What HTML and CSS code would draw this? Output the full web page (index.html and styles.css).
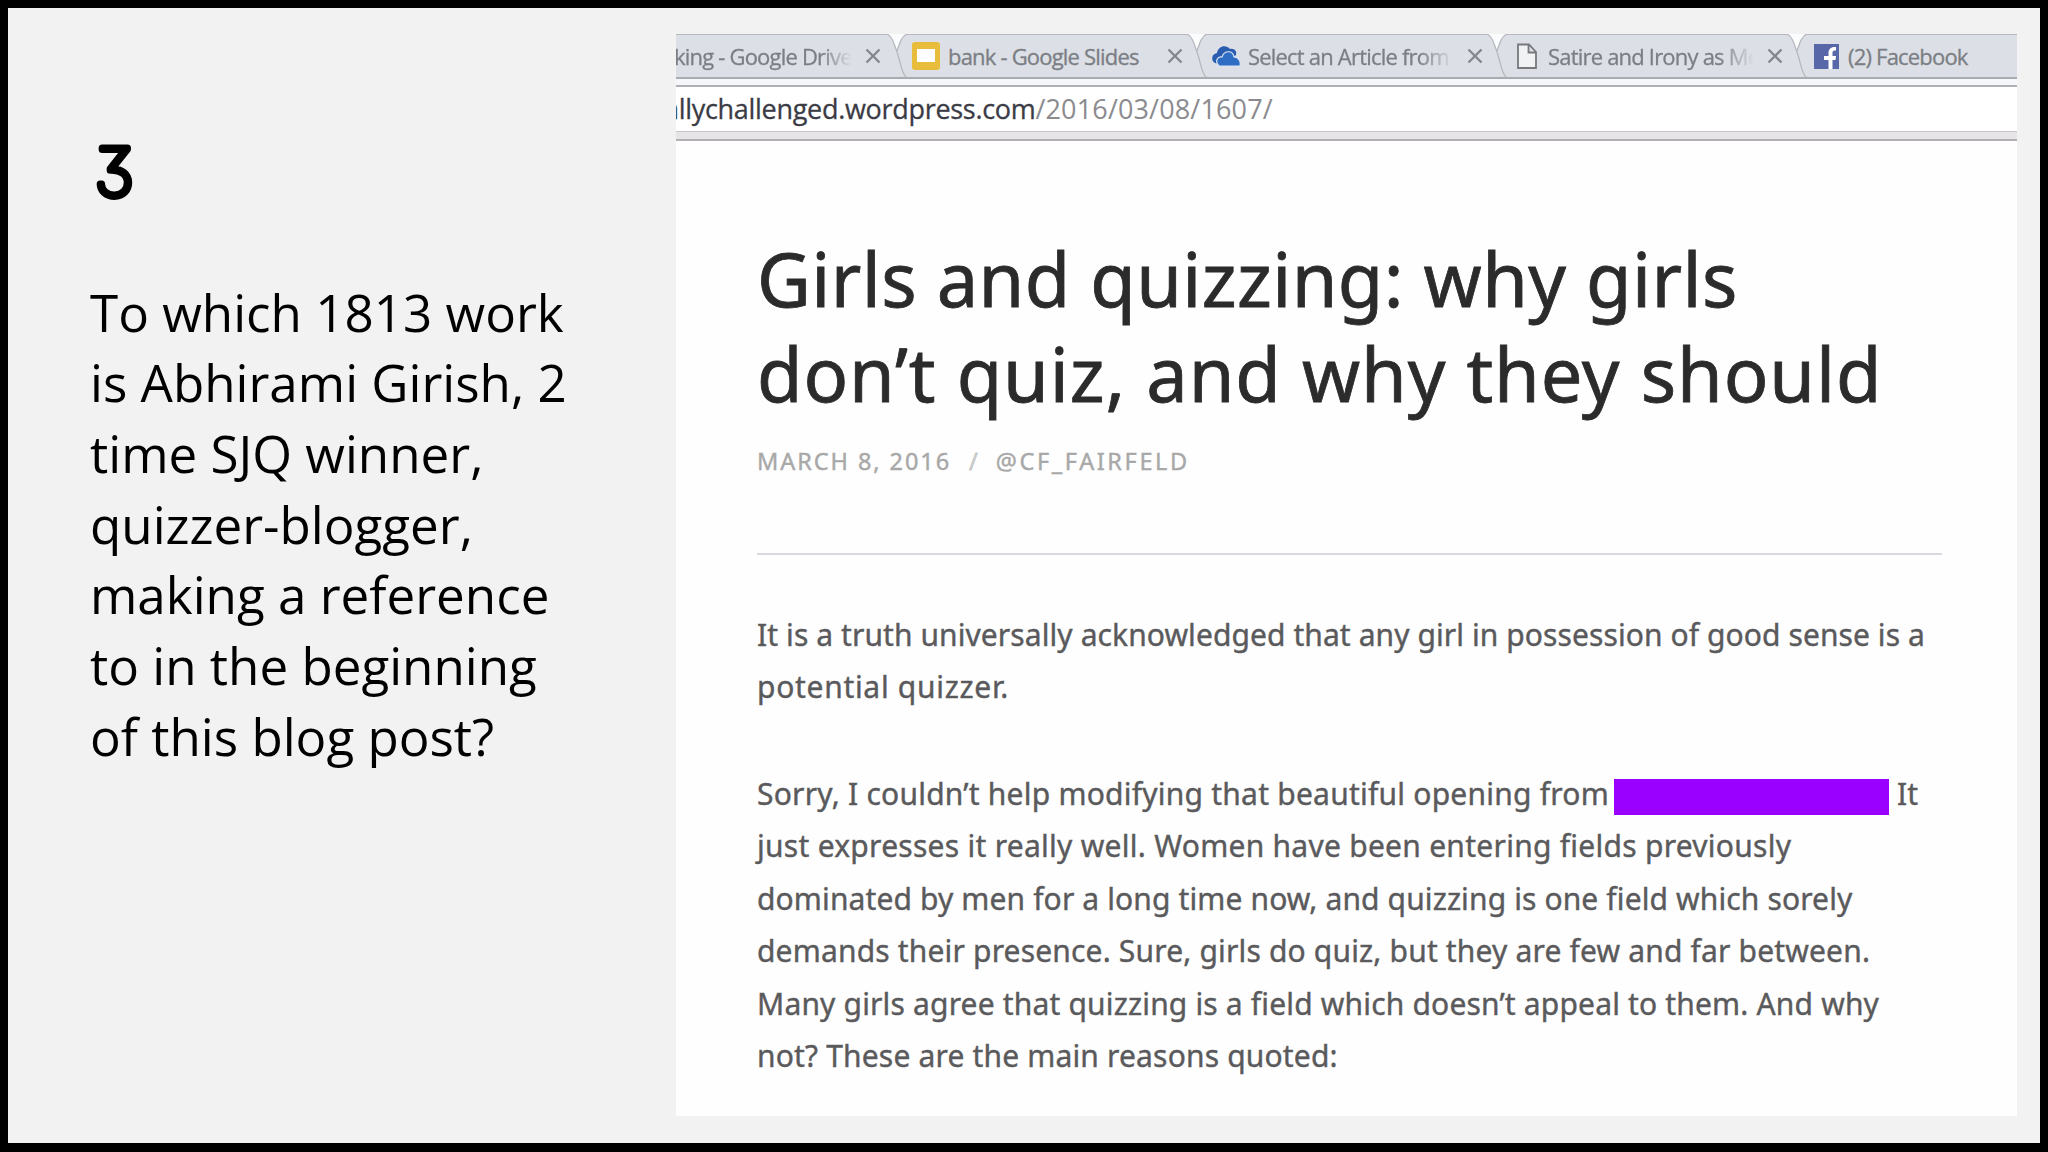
FILE: index.html
```html
<!DOCTYPE html>
<html lang="en">
<head>
    <meta charset="UTF-8">
    <meta name="viewport" content="width=device-width, initial-scale=1.0">
    <title>Question 3</title>
    <link rel="stylesheet" href="styles.css">
</head>
<body>

<div class="slide">

    <div class="question">
        <svg class="number" width="60" height="80" viewBox="0 0 60 80">
            <text class="number-text" transform="translate(5 62.5)">3</text>
        </svg>
        <p class="question-text">To which 1813 work<br>is Abhirami Girish, 2<br>time SJQ winner,<br>quizzer-blogger,<br>making a reference<br>to in the beginning<br>of this blog post?</p>
    </div>

    <div class="browser">
        <div class="tabs">
            <div class="tab tab-first">
                <span class="tab-title fade title-drive">king - Google Drive</span>
                <svg class="close" viewBox="0 0 16 16"><path d="M1.5 1.5l13 13M14.5 1.5l-13 13"/></svg>
            </div>
            <div class="tab">
                <svg class="notch" viewBox="0 0 22 42"><path class="gap" d="M0 -1C4 1 6 6 10 15C13 7 15 1 20 -1Z"/><path class="edge" d="M0 -1C6 2 7 9 11 20C14 30 15 38 19 42M20 -1C15 1 13 7 10 16"/></svg>
                <svg class="icon" viewBox="0 0 30 30"><rect x="1" y="1" width="28" height="28" rx="3" fill="#e9bd3c"/><rect x="6" y="8" width="18" height="13" fill="#fff"/></svg>
                <span class="tab-title">bank - Google Slides</span>
                <svg class="close" viewBox="0 0 16 16"><path d="M1.5 1.5l13 13M14.5 1.5l-13 13"/></svg>
            </div>
            <div class="tab">
                <svg class="notch" viewBox="0 0 22 42"><path class="gap" d="M0 -1C4 1 6 6 10 15C13 7 15 1 20 -1Z"/><path class="edge" d="M0 -1C6 2 7 9 11 20C14 30 15 38 19 42M20 -1C15 1 13 7 10 16"/></svg>
                <svg class="icon" viewBox="0 0 30 30"><path d="M4 22C0 20 0 13 6 12C7 5 15 3 19 8C24 7 26 11 25 14L12 24Z" fill="#2a5db0"/><path d="M8 25C3 20 7 15 11 16C13 9 22 9 23 16C28 16 30 21 29 25Z" fill="#2f6cc4" stroke="#dbe6f5" stroke-width="1.2"/></svg>
                <span class="tab-title fade">Select an Article from</span>
                <svg class="close" viewBox="0 0 16 16"><path d="M1.5 1.5l13 13M14.5 1.5l-13 13"/></svg>
            </div>
            <div class="tab">
                <svg class="notch" viewBox="0 0 22 42"><path class="gap" d="M0 -1C4 1 6 6 10 15C13 7 15 1 20 -1Z"/><path class="edge" d="M0 -1C6 2 7 9 11 20C14 30 15 38 19 42M20 -1C15 1 13 7 10 16"/></svg>
                <svg class="icon" viewBox="0 0 30 30"><path d="M7 3.500H18L25 11V27H7ZM17.500 4V11.500H25" fill="#f1f2f4" stroke="#77787c" stroke-width="1.800"/></svg>
                <span class="tab-title fade">Satire and Irony as Me</span>
                <svg class="close" viewBox="0 0 16 16"><path d="M1.5 1.5l13 13M14.5 1.5l-13 13"/></svg>
            </div>
            <div class="tab tab-last">
                <svg class="notch" viewBox="0 0 22 42"><path class="gap" d="M0 -1C4 1 6 6 10 15C13 7 15 1 20 -1Z"/><path class="edge" d="M0 -1C6 2 7 9 11 20C14 30 15 38 19 42M20 -1C15 1 13 7 10 16"/></svg>
                <svg class="icon" viewBox="0 0 30 30"><rect x="3" y="3" width="25" height="25" fill="#5767a8"/><path d="M17.500 28V19H13V15H17.500V12C17.500 8 20 5.500 25 6V9.500C22 9.300 21.500 10 21.500 12V15H25L24.500 19H21.500V28Z" fill="#fff"/></svg>
                <span class="tab-title">(2) Facebook</span>
            </div>
        </div>
        <div class="address"><span class="host">allychallenged.wordpress.com</span><span class="path">/2016/03/08/1607/</span></div>
        <div class="toolbar-edge"></div>

        <div class="article">
            <h1><span class="title-1">Girls and quizzing: why girls</span><br><span class="title-2">don’t quiz, and why they should</span></h1>
            <div class="meta"><span class="date">MARCH 8, 2016</span><span class="slash">/</span><span class="author">@CF_FAIRFELD</span></div>
            <hr>
            <p>It is a truth universally acknowledged that any girl in possession of good sense is a<br><span class="wide">potential quizzer.</span></p>
            <p class="loose"><span class="opening">Sorry, I couldn’t help modifying that beautiful opening from</span><span class="redacted"></span>It<br><span class="looser">just expresses it really well. Women have been entering fields previously</span><br><span class="snug">dominated by men for a long time now, and quizzing is one field which sorely</span><br>demands their presence. Sure, girls do quiz, but they are few and far between.<br>Many girls agree that quizzing is a field which doesn’t appeal to them. And why<br>not? These are the main reasons quoted:</p>
        </div>
    </div>

</div>

</body>
</html>
```
FILE: styles.css
```css
body {
    margin: 0;
    background-color: #000;
}
.slide {
    display: flex;
    box-sizing: border-box;
    width: 2048px;
    height: 1152px;
    border: 8px solid #000;
    border-bottom-width: 9px;
    background-color: #f2f2f2;
}
.question {
    box-sizing: border-box;
    width: 668px;
    padding: 125px 0 0 82px;
}
.number {
    display: block;
    overflow: visible;
}
.number-text {
    font: 100 66px Inter, sans-serif;
    font-feature-settings: "cv09";
    fill: #000;
    stroke: #000;
    stroke-width: 7px;
    stroke-linejoin: round;
}
.question-text {
    margin: 63.5px 0 0;
    font: 51.15px/70.7px "Open Sans", sans-serif;
    color: #000;
    white-space: nowrap;
}
.browser {
    width: 1341px;
    height: 1082px;
    margin-top: 26px;
    background-color: #fefefe;
    overflow: hidden;
}
.tabs {
    display: flex;
    height: 42px;
    border-top: 1px solid #b6b9be;
    border-bottom: 2px solid #a9abb0;
    background-color: #dce0e6;
}
.tab {
    display: flex;
    align-items: center;
    width: 300px;
    flex: none;
}
.tab-first {
    width: 211px;
}
.tab-last {
    width: 230px;
}
.notch {
    width: 22px;
    height: 42px;
    flex: none;
    overflow: visible;
}
.gap {
    fill: #fbfcfd;
}
.edge {
    fill: none;
    stroke: #b3b6bb;
    stroke-width: 1.2;
}
.icon {
    width: 30px;
    height: 30px;
    margin: 0 7px 0 2px;
    flex: none;
}
.tab-title {
    width: 206px;
    margin-right: 13px;
    flex: none;
    font: 22px/42px "Open Sans", sans-serif;
    letter-spacing: -0.8px;
    color: #7b7e84;
    -webkit-text-stroke: 0.3px #7b7e84;
    white-space: nowrap;
    overflow: hidden;
}
.title-drive {
    width: 178px;
    margin-left: -2px;
}
.fade {
    -webkit-mask-image: linear-gradient(to right, #000 83%, transparent 100%);
    mask-image: linear-gradient(to right, #000 83%, transparent 100%);
}
.close {
    width: 16px;
    height: 16px;
    flex: none;
    fill: none;
    stroke: #85878c;
    stroke-width: 2.4;
}
.address {
    height: 44px;
    border-top: 2px solid #b0b0b4;
    margin-top: 6px;
    background-color: #fff;
    font: 27px/43px "Open Sans", sans-serif;
    white-space: nowrap;
    box-shadow: 0 -6px 0 #f6f7fa;
}
.host {
    margin-left: -12px;
    letter-spacing: -0.3px;
    color: #3b3b45;
    -webkit-text-stroke: 0.3px #3b3b45;
}
.path {
    letter-spacing: 0.15px;
    color: #8b8b8f;
}
.toolbar-edge {
    height: 7px;
    border-top: 1px solid #c6c4c6;
    border-bottom: 2px solid #b1afb1;
    background-color: #e6e4e6;
}
.article {
    padding: 91px 0 0 81px;
    font-family: "Noto Sans", sans-serif;
    white-space: nowrap;
}
h1 {
    margin: 0;
    font-size: 74px;
    font-weight: 400;
    line-height: 94.5px;
    color: #2b2b2b;
    -webkit-text-stroke: 0.8px #2b2b2b;
}
.title-1 {
    letter-spacing: 0.4px;
}
.title-2 {
    letter-spacing: 0.91px;
}
.meta {
    margin-top: 20px;
    font-size: 23.5px;
    line-height: 40px;
    color: #a8a8a8;
    -webkit-text-stroke: 0.4px #a8a8a8;
}
.date {
    letter-spacing: 1.93px;
}
.author {
    letter-spacing: 2.61px;
}
.slash {
    margin: 0 18px;
    color: #d0d0d0;
}
hr {
    width: 1185px;
    margin: 72px 0 53.5px;
    border: 0;
    border-top: 2px solid #dbd7de;
}
.article p {
    margin: 0 0 54px;
    font-size: 30px;
    line-height: 52.5px;
    letter-spacing: 0.085px;
    color: #5a5a5c;
    -webkit-text-stroke: 0.4px #5a5a5c;
}
.article .loose {
    letter-spacing: 0.17px;
}
.wide {
    letter-spacing: 0.7px;
}
.opening {
    letter-spacing: 0.23px;
}
.looser {
    letter-spacing: 0.27px;
}
.snug {
    letter-spacing: 0.126px;
}
.redacted {
    display: inline-block;
    width: 275px;
    height: 36px;
    margin: 0 8px 0 5px;
    vertical-align: -10px;
    background-color: #9900ff;
}
```
